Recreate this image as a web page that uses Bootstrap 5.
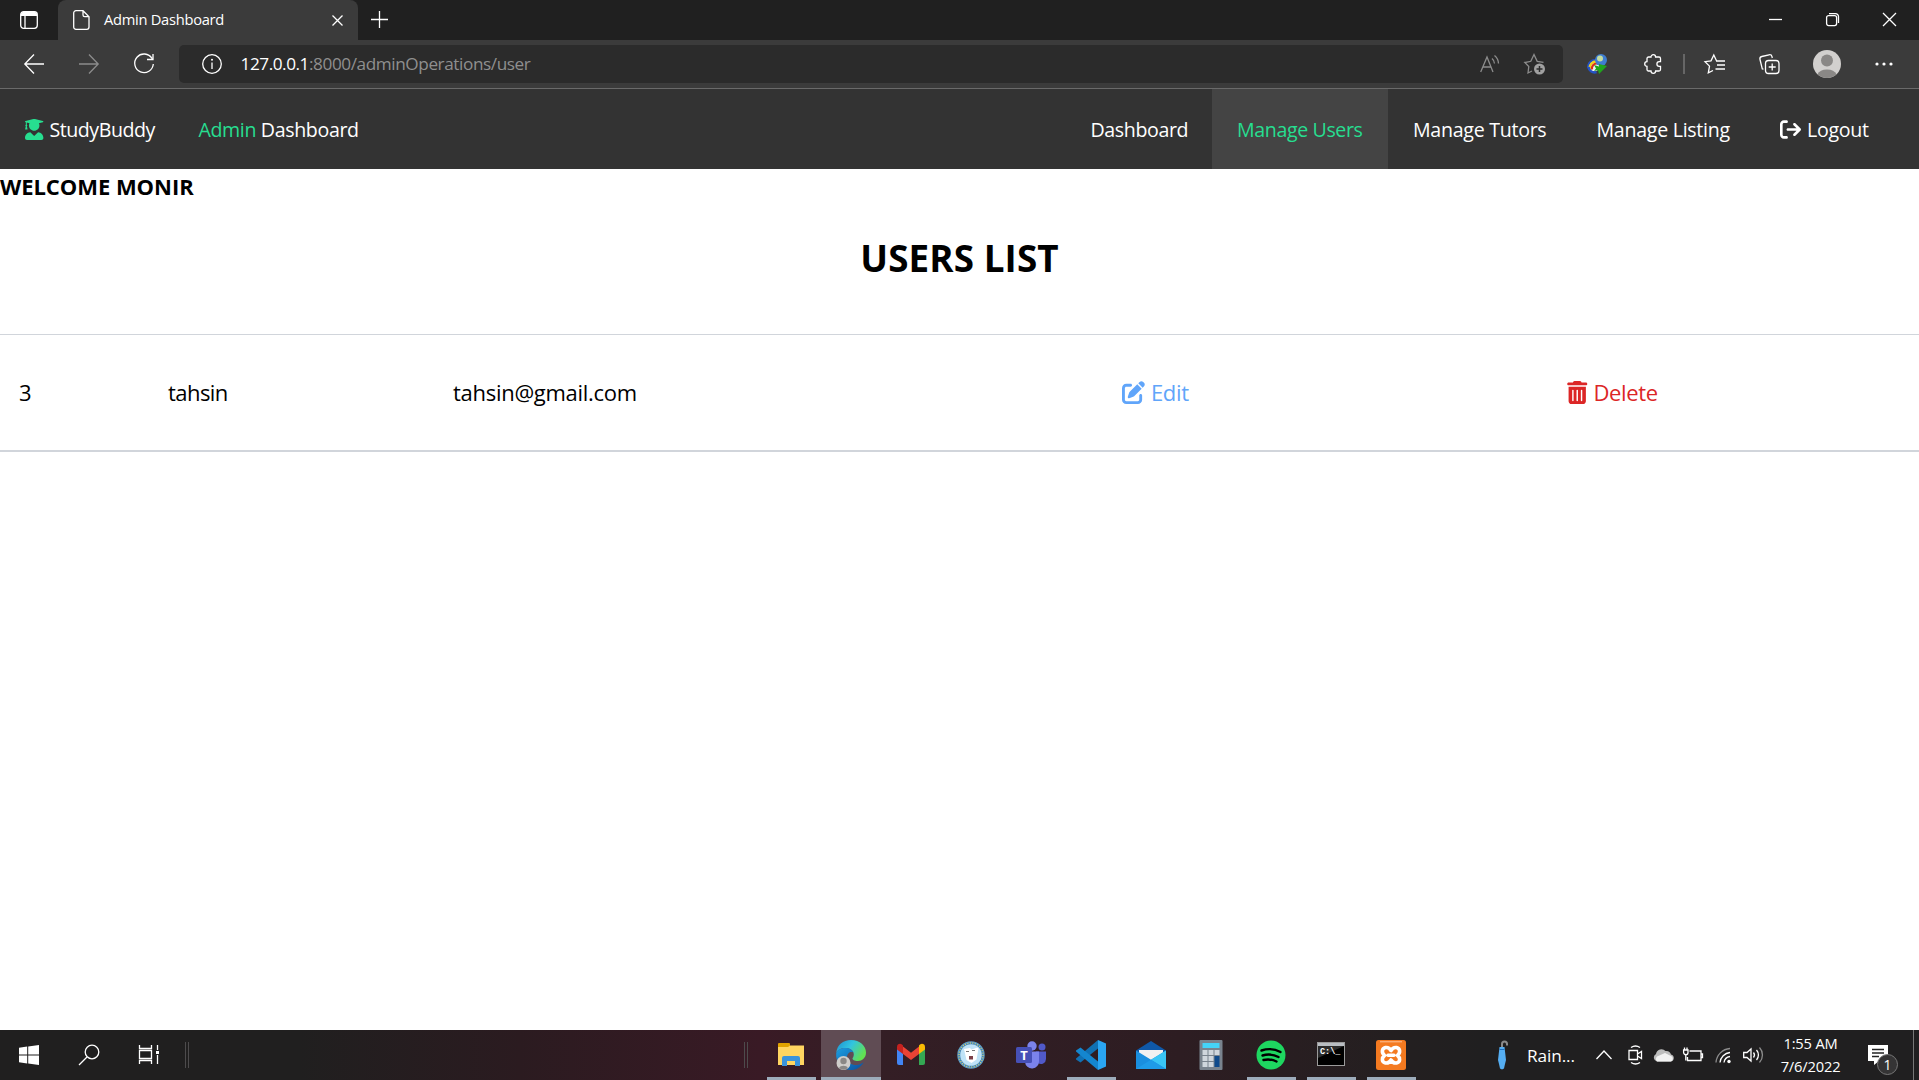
<!DOCTYPE html>
<html lang="en">
<head>
<meta charset="utf-8">
<title>Admin Dashboard</title>
<link href="https://cdn.jsdelivr.net/npm/bootstrap@5.3.0/dist/css/bootstrap.min.css" rel="stylesheet">
<style>
body{font-family:"Open Sans","Noto Sans",sans-serif;color:#000;width:1919px;height:1080px;overflow:hidden;background:#fff}
svg{display:block;flex:none;overflow:visible}
span,h1,h2,a,td{white-space:nowrap}
.ln{fill:none;stroke:#fff;stroke-width:1.3}
.dim{stroke:#8c8c8c}
.tabstrip{height:40px;background:#202020}
.tab-lead{width:58px}
.tab-active{width:300px;height:40px;background:#3b3b3b;border-radius:8px 8px 0 0;padding:0 15px 0 15px}
.tab-title{font-size:14.7px;color:#fff;margin-left:14px;letter-spacing:-.28px;line-height:38px;padding-bottom:2px}
.newtab{margin-left:13px}
.winctl{padding:0 23px 2px 0;gap:44px}
.toolbar{height:49px;background:#3b3b3b;border-bottom:1px solid #6a6a6a;padding-left:6.5px}
.slot{width:55px;flex:none}
.slot-sep{width:7px}
.slot-user{width:58px}
.slot-more{width:57px}
.addressbar{width:1384px;height:38px;margin:0 7.5px 0 7.5px;background:#2b2b2b;border-radius:5px;padding:0 17px 0 22.5px}
.url{font-size:17.2px;color:#8f8f8f;margin-left:19px;line-height:36px;letter-spacing:-.42px}
.url b{font-weight:400;color:#fff;letter-spacing:-.45px}
.fav-add{margin-left:24px}
.sitebar{height:80px;background:#333;font-size:19.6px;padding:0 25px}
.sitebar span,.sitebar a{color:#fff;text-decoration:none;letter-spacing:-.28px}
.sitebar .brand{margin-left:6px;letter-spacing:-.45px}
.sitebar .brand2{margin-left:43.5px}
.sitebar .brand2,.sitebar .brand2 span{letter-spacing:-.36px}
.sitebar .green{color:#27de90}
.sitebar span{padding-top:2px}
.site-link{height:80px;padding-left:25px}
.site-link.active{background:#444}
.wd-home{width:146.5px}.wd-users{width:176px}.wd-list{width:183.5px}.wd-out{width:139px}
.sitebar .wd-home span,.sitebar .wd-users span{letter-spacing:-.38px}
.ms-icon{margin-left:6px}
.welcome{font-size:22px;font-weight:700;line-height:34px;margin:0;letter-spacing:-.05px}
.list-title{font-size:36.8px;font-weight:700;line-height:50px;margin:30px 0 51px;letter-spacing:.1px}
.users{font-size:22px;margin:0;table-layout:fixed;border-collapse:separate;border-spacing:0;border-top:1px solid #d1d5db;border-bottom:2px solid #d1d5db;width:1919px}
.users td{height:115px;padding:0 0 0 20px;vertical-align:middle}
.users td.uid{padding-left:19px}
.users a{text-decoration:none;display:flex;align-items:center;letter-spacing:-.35px}
.users a span{margin-left:6px}
.uname{letter-spacing:-.55px}
.umail{letter-spacing:-.28px}
.c-edit{color:#60a5fa}.c-del{color:#dc2626}
.taskbar{height:50px;background:linear-gradient(90deg,#201f1f 0,#201f1f 300px,#2b1b20 520px,#391a25 760px,#341e25 880px,#2d1d22 1180px,#241f20 1390px,#201f20 1480px);color:#fff}
.task{width:60px;height:50px;flex:none}
.task-first{width:58px}
.grip{width:4px;height:26px;border:solid #4d4b4c;border-width:0 1px}
.grip-a{margin-left:7px}
.grip-b{margin:0 13px 0 555px}
.task svg{margin-top:10px}
.run{width:49px;height:3px;background:#9dacbb;margin-top:auto}
.current{background:#604c54}
.current .run{width:60px}
.weather{margin-left:76px}
.rain{font-size:17.2px;margin-left:19px;width:48px;letter-spacing:-.1px;padding-top:2px}
.tray{margin-left:20.5px}
.tray-cam{margin-left:16px}.tray-cloud{margin-left:10px}.tray-bat{margin-left:9px}.tray-net{margin-left:12px}
.clock{font-size:14.7px;line-height:23px;width:70px;margin-left:13px;letter-spacing:-.18px}
.notif{margin-left:22px}
.peek{width:6px;height:50px;border-left:1px solid #777}
</style>
</head>
<body class="d-flex flex-column">
<header>
<div class="tabstrip d-flex align-items-center">
  <div class="tab-lead d-flex align-items-center justify-content-center"><svg width="18" height="18"><rect x=".7" y=".7" width="16.6" height="16.6" rx="3" class="ln"/><path d="M1 3a2 2 0 0 1 2-2h12a2 2 0 0 1 2 2v2H1z" fill="#fff"/><path d="M5 5v12" class="ln"/></svg></div>
  <div class="tab-active d-flex align-items-center">
    <svg width="17" height="20"><path d="M3 .7h7l6 6V17a2.300 2.300 0 0 1-2.300 2.300H3A2.300 2.300 0 0 1 .7 17V3A2.300 2.300 0 0 1 3 .7zM10 .7V5a1.700 1.700 0 0 0 1.700 1.700H16" class="ln"/></svg>
    <span class="tab-title">Admin Dashboard</span>
    <svg class="ms-auto" width="11" height="11"><path d="M.5 .5l10 10M10.500 .5L.5 10.500" class="ln"/></svg>
  </div>
  <svg class="newtab" width="17" height="18"><path d="M0 8.500h17M8.500 0v17" class="ln"/></svg>
  <div class="winctl d-flex ms-auto align-items-center">
    <svg width="13" height="13"><path d="M0 6.500h13" class="ln"/></svg>
    <svg width="13" height="13"><rect x=".6" y="2.600" width="10" height="10" rx="2" class="ln"/><path d="M3 .6h6.500a3 3 0 0 1 3 3V10" class="ln"/></svg>
    <svg width="13" height="13"><path d="M0 0l13 13M13 0L0 13" class="ln"/></svg>
  </div>
</div>
<div class="toolbar d-flex align-items-center">
  <div class="slot d-flex justify-content-center"><svg width="20" height="20"><path d="M20 10H1M10 .5L.8 10l9.200 9.500" class="ln"/></svg></div>
  <div class="slot d-flex justify-content-center"><svg width="20" height="20"><path d="M0 10h19M10 .5l9.200 9.500-9.200 9.500" class="ln dim"/></svg></div>
  <div class="slot d-flex justify-content-center"><svg width="20" height="20"><path d="M18 4.500A9.300 9.300 0 1 0 19.300 10M19 0v5.500h-6" class="ln"/></svg></div>
  <div class="addressbar d-flex align-items-center">
    <svg width="20" height="20"><circle cx="10" cy="10" r="9.300" class="ln"/><path d="M10 8.500V15" class="ln"/><circle cx="10" cy="5.800" r="1" fill="#fff"/></svg>
    <span class="url"><b>127.0.0.1</b>:8000/adminOperations/user</span>
    <svg class="ms-auto" width="20" height="20"><path d="M.7 18L7 3l6 15M3 13h8.500M12 4.500a7 7 0 0 1 2.500 5M14.500 1.500a11 11 0 0 1 4 8" class="ln dim"/></svg>
    <svg class="fav-add" width="22" height="22"><path d="M8 18l-4 2 .8-6.500L.8 9.500l6-1.200L10 1.500l3.200 6.800 6.300 1" class="ln dim"/><circle cx="15.500" cy="16" r="5.500" fill="#a0a0a0"/><path d="M15.500 13v6M12.500 16h6" stroke="#2b2b2b" stroke-width="1.500"/></svg>
  </div>
  <div class="slot d-flex justify-content-center"><svg width="22" height="20"><circle cx="7" cy="12" r="5.500" fill="#f4f4f4"/><path d="M1.200 14a7 7 0 0 1 8-8" fill="none" stroke="#2452c4" stroke-width="2"/><path d="M2.800 15a6.500 6.500 0 0 1 7-7.500" fill="none" stroke="#f2d21b" stroke-width="2.400"/><path d="M5 15.500a5 5 0 0 1 5-6" fill="none" stroke="#d6301d" stroke-width="2.200"/><path d="M1.500 13a6 6 0 0 0 8 5" fill="none" stroke="#2452c4" stroke-width="2.500"/><circle cx="14" cy="6" r="6" fill="#3f7dd0"/><circle cx="13" cy="4.500" r="3" fill="#c3dca0"/><path d="M7 11l5 1.500V10l8 2-8 8-1-4-4 1 2-2.500z" fill="#20a51c"/></svg></div>
  <div class="slot d-flex justify-content-center"><svg width="20" height="20"><path d="M5.500 3H8a2.300 2.300 0 1 1 4.600 0H16a1.500 1.500 0 0 1 1.500 1.500v3.200h-1.300a2.200 2.200 0 0 0 0 4.600h1.300V15.500A1.500 1.500 0 0 1 16 17h-3.400a2.300 2.300 0 1 1-4.600 0H5.500A1.500 1.500 0 0 1 4 15.500v-3.200a2.300 2.300 0 1 1 0-4.600V4.500A1.500 1.500 0 0 1 5.500 3z" class="ln"/></svg></div>
  <div class="slot-sep d-flex justify-content-center"><svg width="2" height="20"><path d="M0 0h2v20H0z" fill="#666"/></svg></div>
  <div class="slot d-flex justify-content-center"><svg width="23" height="20"><path d="M12.500 6.800L9.800 1 7 6.800 1 7.700l4.500 4.400-1.200 6.700L9 16.500M12 7h9M13 11h8M11.500 15H21" class="ln"/></svg></div>
  <div class="slot d-flex justify-content-center"><svg width="23" height="20"><rect x="6.500" y="6.500" width="13.500" height="13" rx="3" class="ln"/><path d="M13.200 9.500v7M9.700 13h7M4.500 15.200L3.300 15 1 5.500a2.500 2.500 0 0 1 1.800-3L10 .8a2.500 2.500 0 0 1 3 1.800l.3 1.400" class="ln"/></svg></div>
  <div class="slot-user d-flex justify-content-center"><svg width="28" height="28"><circle cx="14" cy="14" r="14" fill="#d2d0ce"/><circle cx="14" cy="10.500" r="6" fill="#8a8886"/><path d="M4.500 24.300a10 7 0 0 1 19 0A14 14 0 0 1 4.500 24.300z" fill="#8a8886"/></svg></div>
  <div class="slot-more d-flex justify-content-center"><svg width="18" height="4"><g fill="#fff"><circle cx="2" cy="2" r="1.600"/><circle cx="9" cy="2" r="1.600"/><circle cx="16" cy="2" r="1.600"/></g></svg></div>
</div>
</header>
<nav class="sitebar d-flex align-items-center">
  <svg width="18.400" height="21" viewBox="0 0 448 512"><path fill="#27de90" d="M319.400 320.600L224 416l-95.400-95.400C57.100 323.700 0 382.200 0 454.400v9.600c0 26.500 21.500 48 48 48h352c26.500 0 48-21.500 48-48v-9.600c0-72.200-57.100-130.700-128.600-133.800zM13.600 79.800l6.400 1.500v58.400c-7 4.200-12 11.500-12 20.300 0 8.400 4.600 15.400 11.100 19.700L3.500 242c-1.700 6.900 2.100 14 7.600 14h41.800c5.500 0 9.300-7.100 7.600-14l-15.600-62.300C51.400 175.400 56 168.400 56 160c0-8.800-5-16.100-12-20.300V87.100l66 15.900c-8.600 17.200-14 36.400-14 57 0 70.700 57.300 128 128 128s128-57.300 128-128c0-20.600-5.300-39.800-14-57l96.300-23.200c18.200-4.400 18.200-27.100 0-31.500l-190.400-46c-13-3.100-26.700-3.100-39.700 0L13.600 48.200c-18.100 4.400-18.100 27.100 0 31.600z"/></svg>
  <span class="brand">StudyBuddy</span>
  <span class="brand2"><span class="green">Admin</span> Dashboard</span>
  <div class="d-flex ms-auto">
    <a class="site-link wd-home d-flex align-items-center"><span>Dashboard</span></a>
    <a class="site-link active wd-users d-flex align-items-center"><span class="green">Manage Users</span></a>
    <a class="site-link wd-list d-flex align-items-center"><span>Manage Tutors</span></a>
    <a class="site-link wd-list d-flex align-items-center"><span>Manage Listing</span></a>
    <a class="site-link wd-out d-flex align-items-center"><svg width="21" height="21" viewBox="0 0 512 512"><path fill="#fff" d="M96 480h64C177.700 480 192 465.700 192 448S177.700 416 160 416H96c-17.670 0-32-14.330-32-32V128c0-17.670 14.330-32 32-32h64C177.700 96 192 81.670 192 64S177.700 32 160 32H96C42.980 32 0 74.980 0 128v256C0 437 42.980 480 96 480zM502.600 278.600l-128 128c-12.510 12.510-32.760 12.490-45.250 0c-12.500-12.500-12.500-32.750 0-45.250L402.800 288H192C174.300 288 160 273.700 160 256S174.300 224 192 224h210.800l-73.380-73.380c-12.500-12.500-12.500-32.750 0-45.250s32.750-12.500 45.250 0l128 128C515.100 245.900 515.100 266.100 502.600 278.600z"/></svg><span class="ms-icon">Logout</span></a>
  </div>
</nav>
<main class="flex-grow-1">
  <h2 class="welcome">WELCOME MONIR</h2>
  <h1 class="list-title text-center">USERS LIST</h1>
  <table class="users">
    <colgroup><col style="width:148px"><col style="width:285px"><col style="width:669px"><col style="width:445px"><col></colgroup>
    <tr><td class="uid">3</td><td class="uname">tahsin</td><td class="umail">tahsin@gmail.com</td>
    <td><a class="c-edit"><svg width="23" height="23" viewBox="0 0 512 512"><path fill="currentColor" d="M490.300 40.400C512.200 62.270 512.200 97.730 490.300 119.600L460.300 149.700L362.300 51.720L392.400 21.660C414.300-.2135 449.700-.2135 471.600 21.660L490.300 40.400zM172.400 241.700L339.700 74.340L437.700 172.300L270.300 339.600C264.200 345.800 256.700 350.400 248.400 353.200L159.600 382.800C150.100 385.600 141.500 383.400 135 376.100C128.600 370.500 126.400 361 129.200 352.400L158.800 263.600C161.600 255.300 166.200 247.800 172.400 241.700V241.700zM192 63.100C209.700 63.100 224 78.330 224 95.100C224 113.700 209.700 127.100 192 127.100H96C78.330 127.100 64 142.300 64 159.100V416C64 433.700 78.330 448 96 448H352C369.700 448 384 433.700 384 416V319.100C384 302.300 398.300 287.100 416 287.100C433.700 287.100 448 302.300 448 319.100V416C448 469 405 512 352 512H96C42.980 512 0 469 0 416V159.100C0 106.100 42.980 63.100 96 63.100H192z"/></svg><span>Edit</span></a></td>
    <td><a class="c-del"><svg width="20.500" height="23" viewBox="0 0 448 512"><path fill="currentColor" d="M135.200 17.690C140.600 6.848 151.700 0 163.800 0H284.200C296.300 0 307.400 6.848 312.800 17.690L320 32H416C433.700 32 448 46.330 448 64C448 81.670 433.700 96 416 96H32C14.330 96 0 81.670 0 64C0 46.330 14.330 32 32 32H128L135.200 17.690zM31.100 128H416V448C416 483.300 387.300 512 352 512H95.100C60.650 512 31.100 483.300 31.100 448V128zM111.100 208V432C111.100 440.800 119.200 448 127.100 448C136.800 448 143.100 440.800 143.100 432V208C143.100 199.200 136.800 192 127.100 192C119.200 192 111.100 199.200 111.100 208zM207.100 208V432C207.100 440.800 215.200 448 223.100 448C232.800 448 240 440.800 240 432V208C240 199.200 232.800 192 223.100 192C215.200 192 207.100 199.200 207.100 208zM304 208V432C304 440.800 311.200 448 320 448C328.800 448 336 440.800 336 432V208C336 199.200 328.800 192 320 192C311.200 192 304 199.200 304 208z"/></svg><span>Delete</span></a></td></tr>
  </table>
</main>
<footer class="taskbar d-flex align-items-center">
  <div class="task task-first d-flex flex-column align-items-center"><svg width="30" height="30"><path fill="#fff" d="M5 7.800l8.200-1.200v7.900H5zM14.200 6.500L25 5v9.500H14.200zM5 15.500h8.200v7.900L5 22.200zM14.200 15.500H25V25l-10.800-1.500z"/></svg></div>
  <div class="task d-flex flex-column align-items-center"><svg width="30" height="30"><circle cx="19" cy="12" r="6.800" class="ln"/><path d="M14 17l-8 8" class="ln"/></svg></div>
  <div class="task d-flex flex-column align-items-center"><svg width="30" height="30"><path d="M6.500 5v3.500h12V5M6.500 24v-3.500h12V24M6.500 10.500h12v8h-12zM24.500 5v5M24.500 15v9" class="ln"/><path d="M23 11h3v3h-3z" fill="#fff"/></svg></div>
  <div class="grip grip-a"></div>
  <div class="grip grip-b"></div>
  <div class="task d-flex flex-column align-items-center"><svg width="30" height="30"><path d="M2 4a1 1 0 0 1 1-1h10a1 1 0 0 1 1 1v4H2z" fill="#e0a200"/><path d="M2 7h10l2-1.500h14V25H2z" fill="#ffd561"/><path d="M6 26v-8a2 2 0 0 1 2-2h14a2 2 0 0 1 2 2v8h-5v-5h-8V26z" fill="#3a93dc"/></svg><div class="run"></div></div>
  <div class="task current d-flex flex-column align-items-center"><svg width="30" height="30"><defs><linearGradient id="eg" x1="0" y1="0" x2="1" y2=".5"><stop offset="0" stop-color="#1c8fd0"/><stop offset=".5" stop-color="#32c4e0"/><stop offset="1" stop-color="#62e052"/></linearGradient><linearGradient id="eb" x1="0" y1="0" x2="1" y2="1"><stop offset="0" stop-color="#1b9de0"/><stop offset="1" stop-color="#0c4f9e"/></linearGradient></defs><path d="M.2 13C1 5 7 0 15 0c9 0 15 6 15 12.500C30 18 26 21 22 21c-4 0-5.500-1.500-5.500-2.500 0-.8 1.300-1.500 1.300-4C17.800 10.500 14 8 9.500 8 5 8 1.500 10 .2 13z" fill="url(#eg)"/><path d="M.2 13C1.500 10 5 8 9.500 8c4 0 7 2 8 4.500-3-1.500-6.500.5-6.500 5 0 5 5 8 10 7.500 3-.3 5.500-1.800 6.800-3C25 27.500 20 30 15 30 6 30-.8 22 .2 13z" fill="url(#eb)"/><circle cx="7.500" cy="23" r="7" fill="#cfcdca"/><circle cx="7.500" cy="21" r="3.200" fill="#8a8886"/><path d="M3 28a4.800 3.500 0 0 1 9 0 7 7 0 0 1-9 0z" fill="#8a8886"/></svg><div class="run"></div></div>
  <div class="task d-flex flex-column align-items-center"><svg width="30" height="30"><path d="M1 7v16a2 2 0 0 0 2 2h4V12z" fill="#4285f4"/><path d="M29 7v16a2 2 0 0 1-2 2h-4V12z" fill="#34a853"/><path d="M7 6.500l8 6.300 8-6.300v7.500l-8 6-8-6z" fill="#ea4335"/><path d="M1 7c0-3 3-4 5-2.500l1 1V14l-6-4.500z" fill="#c5221f"/><path d="M29 7c0-3-3-4-5-2.500l-1 1V14l6-4.500z" fill="#fbbc04"/></svg></div>
  <div class="task d-flex flex-column align-items-center"><svg width="30" height="30"><circle cx="15" cy="15" r="13" fill="#3f83b8" stroke="#5d9cc4" stroke-width="1.500"/><circle cx="15" cy="15" r="12" fill="none" stroke="#d9cf72" stroke-width="1.300" stroke-dasharray="1 1.500"/><circle cx="15" cy="15" r="10.800" fill="#bfe3f7"/><path d="M8 9l6-1 1.500 1.500 6-2 1 1-2 11-5 3.500-5-3z" fill="#fff"/><path d="M10 11.500h3M16 10.500h3" stroke="#777" stroke-width="1.200"/><path d="M13 16h4v3.500h-4z" fill="#7b4048"/></svg></div>
  <div class="task d-flex flex-column align-items-center"><svg width="30" height="30"><circle cx="26" cy="7" r="3.500" fill="#5059c9"/><circle cx="16" cy="6" r="4.700" fill="#7b83eb"/><path d="M20 11.500h10V19a5 5 0 0 1-8 4z" fill="#5059c9"/><path d="M9 11.500h14V21a7 7 0 0 1-14 1z" fill="#7b83eb"/><rect y="7" width="16" height="16" rx="1.500" fill="#4650b6"/><text x="8" y="19.500" text-anchor="middle" font-size="13" font-weight="700" fill="#fff">T</text></svg></div>
  <div class="task d-flex flex-column align-items-center"><svg width="30" height="30"><path d="M22 0L30 3.500v23L22 30z" fill="#2aa5f2"/><path d="M22 0v8.500L4.500 22.500 0 19.500v-1z" fill="#1070b3"/><path d="M22 30v-8.500L4.500 7.500 0 10.500v1z" fill="#1486cf"/></svg><div class="run"></div></div>
  <div class="task d-flex flex-column align-items-center"><svg width="30" height="30"><path d="M0 10.500L15 1l15 9.500V20H0z" fill="#0f58a8"/><path d="M3 10h24v4l-11 7-13-7z" fill="#f1f1f1"/><path d="M0 10.500L15 19.800 30 10.500V29H0z" fill="#1a8fdf"/><path d="M30 10.500V29L15 19.800z" fill="#39c5f5"/><path d="M0 29l15-9.200L30 29z" fill="#1f9be8"/></svg></div>
  <div class="task d-flex flex-column align-items-center"><svg width="30" height="30"><rect x="3.500" width="23" height="30" rx="1" fill="#79838e"/><path d="M6.500 3h17v5h-17z" fill="#45d3f7"/><path d="M6.500 10h5v5h-5zM12.500 10h5v5h-5zM18.500 10h5v5h-5zM6.500 16h5v5h-5zM12.500 16h5v5h-5zM6.500 22h5v5h-5zM12.500 22h5v5h-5z" fill="#cfd6dd"/><path d="M18.500 16h5v11h-5z" fill="#0f4a8c"/></svg></div>
  <div class="task d-flex flex-column align-items-center"><svg width="30" height="30"><circle cx="15" cy="15" r="14.500" fill="#1ed760"/><path d="M5.500 10.500c6-2 13.500-1.500 19 1.500M6.500 15.500c5-1.500 11-1 16 1.500M7.500 20c4.500-1 9-.5 13 1.500" fill="none" stroke="#000" stroke-width="2.400" stroke-linecap="round"/></svg><div class="run"></div></div>
  <div class="task d-flex flex-column align-items-center"><svg width="30" height="30"><rect x="1.500" y="2.500" width="27" height="23" fill="#000" stroke="#9b9b9b"/><path d="M2 3h26v3H2z" fill="#b9bdc2"/><path d="M2 6h26L2 18z" fill="#2c2c2c"/><text x="4" y="14" font-family="Liberation Mono, monospace" font-size="8.500" font-weight="700" fill="#fff">C:\_</text></svg><div class="run"></div></div>
  <div class="task d-flex flex-column align-items-center"><svg width="30" height="30"><rect width="30" height="30" rx="2.500" fill="#f47a20"/><path d="M4 1.800h22" stroke="#ffc296"/><path d="M15 10.500Q13 7 9.500 7.500C5.500 8.500 5.500 13 8.500 15.500 5.500 18 5.500 22 9.500 23Q13 23.500 15 20Q17 23.500 20.500 23C24.500 22 24.500 18 21.500 15.500 24.500 13 24.500 8.500 20.500 7.500Q17 7 15 10.500zM12 15.300h6" fill="none" stroke="#fff" stroke-width="3.600" stroke-linecap="round" stroke-linejoin="round"/></svg><div class="run"></div></div>
  <svg class="weather" width="11" height="30"><path d="M5 8V4a2.500 2.500 0 0 1 5 0v1.500" fill="none" stroke="#8a8a8a" stroke-width="2"/><path d="M2.500 7h5l1.500 13-1 4-1 4.500-2 1-2-1-1-4.500-1-4z" fill="#55aef2"/><path d="M2.500 9.500h5" stroke="#1c6fc0"/></svg>
  <span class="rain">Rain...</span>
  <div class="tray d-flex align-items-center">
    <svg width="16" height="10"><path d="M.5 9L8 1l7.500 8" class="ln"/></svg>
    <svg class="tray-cam" width="15" height="20"><path d="M1 5.500h8.500v9H1zM9.500 9l4-2.500v7l-4-2.500M3 2.500c3-2 6-2 9 0M3 17.500c3 2 6 2 9 0" class="ln"/></svg>
    <svg class="tray-cloud" width="21" height="14"><path d="M4 13.500a4 4 0 0 1-1-7.500 5.500 5.500 0 0 1 9.500-3A5 5 0 0 1 18 6.500a3.600 3.600 0 0 1 0 7z" fill="#bdbdbd"/><path d="M4 13.500a3.800 3.800 0 0 1 0-5l8-3.500 6 3a3 3 0 0 1 0 5.500z" fill="#f2f2f2"/></svg>
    <svg class="tray-bat" width="20" height="16"><path d="M6.500 4H18v9.500H4.500V10M18 7h1.500v3.500H18M1.500 .5V3M4 .5V3M.6 3H5v2.500a2.200 2.200 0 0 1-4.400 0zM2.800 7.500v6" class="ln"/></svg>
    <svg class="tray-net" width="16" height="18"><circle cx="14" cy="15.500" r="1.700" fill="#fff"/><path d="M9 16.500a7 7 0 0 1 6-6M5 16.500A11 11 0 0 1 15 6.500" class="ln"/><path d="M1 16.500A15 15 0 0 1 15 2.500" class="ln dim"/></svg>
    <svg class="tray-net" width="20" height="18"><path d="M.7 6.500H4L8 3v12l-4-3.500H.7zM10.500 6.500a4 4 0 0 1 0 5M13.500 4a7.500 7.500 0 0 1 0 10" class="ln"/><path d="M16.500 1.500a11 11 0 0 1 0 15" class="ln dim"/></svg>
  </div>
  <div class="clock text-center"><div>1:55 AM</div><div>7/6/2022</div></div>
  <svg class="notif" width="30" height="30"><path d="M0 5h20v16h-9l-5 4v-4H0z" fill="#fff"/><path d="M4 9.500h12M4 13h12M4 16.500h7" stroke="#222" stroke-width="1.400"/><circle cx="19.500" cy="24.500" r="10" fill="#353435" stroke="#777"/><text x="19.500" y="29.500" text-anchor="middle" font-size="14" fill="#fff">1</text></svg>
  <div class="peek ms-auto"></div>
</footer>
<script src="https://cdn.jsdelivr.net/npm/bootstrap@5.3.0/dist/js/bootstrap.bundle.min.js"></script>
</body>
</html>
